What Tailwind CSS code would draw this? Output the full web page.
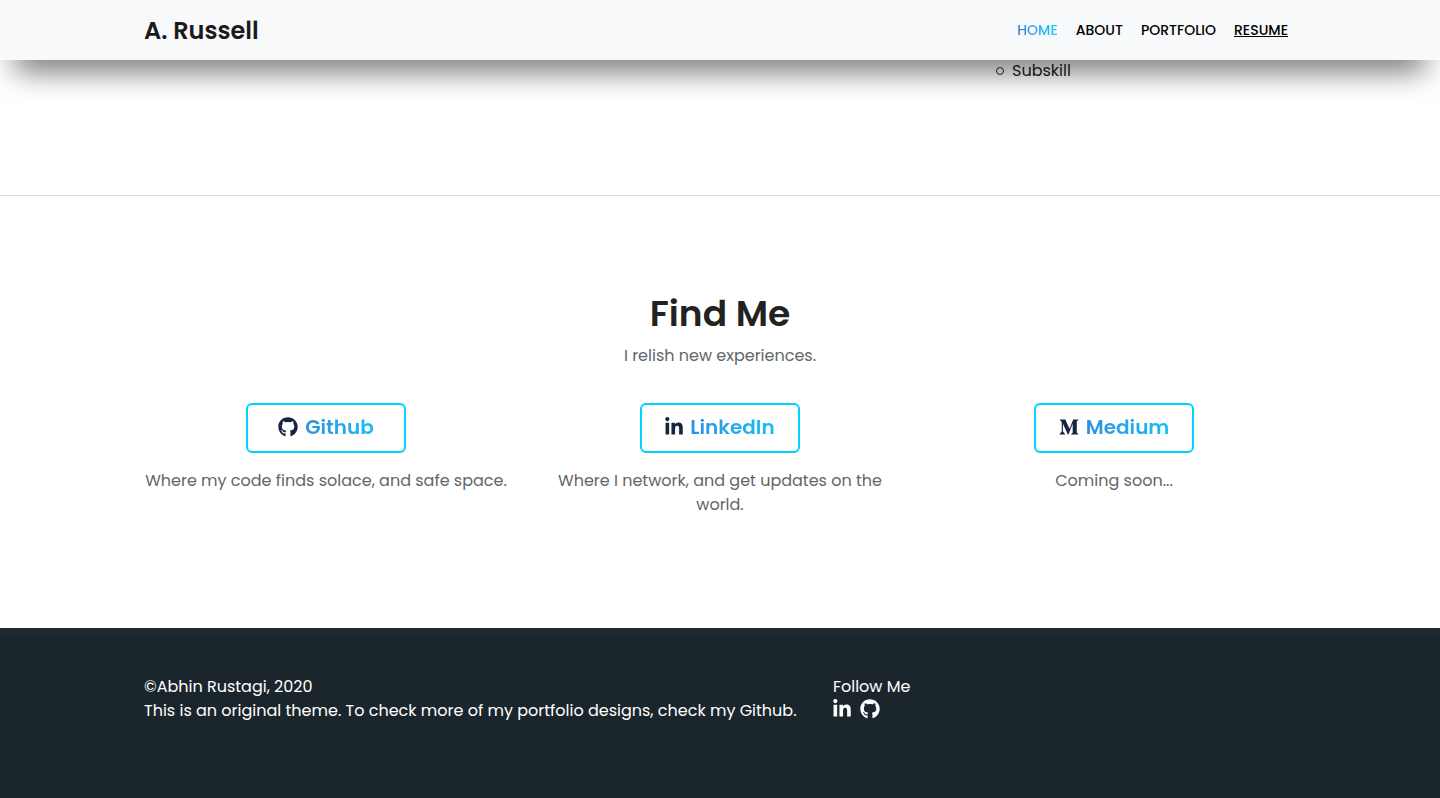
<!DOCTYPE html>
<html lang="en">
<head>
<meta charset="utf-8">
<meta name="viewport" content="width=device-width, initial-scale=1">
<title>A. Russell</title>
<script src="https://cdn.jsdelivr.net/npm/@tailwindcss/browser@4"></script>
</head>
<body class="flex min-h-screen flex-col bg-white font-[Poppins,Inter,sans-serif] text-base text-[#222]">
<svg class="hidden">
  <defs>
    <symbol id="github" viewBox="0 0 496 512"><path d="M165.900 397.400c0 2-2.300 3.600-5.200 3.600-3.300.3-5.600-1.300-5.600-3.600 0-2 2.300-3.600 5.200-3.600 3-.3 5.600 1.300 5.600 3.600zm-31.100-4.500c-.7 2 1.300 4.300 4.300 4.900 2.600 1 5.600 0 6.200-2s-1.300-4.300-4.300-5.200c-2.600-.7-5.500.3-6.200 2.300zm44.200-1.700c-2.900.7-4.900 2.600-4.600 4.900.3 2 2.900 3.300 5.900 2.600 2.900-.7 4.900-2.600 4.600-4.600-.3-1.900-3-3.200-5.900-2.900zM244.800 8C106.100 8 0 113.300 0 252c0 110.900 69.800 205.800 169.500 239.200 12.800 2.300 17.300-5.600 17.300-12.100 0-6.200-.3-40.400-.3-61.400 0 0-70 15-84.700-29.800 0 0-11.400-29.100-27.800-36.600 0 0-22.900-15.700 1.600-15.400 0 0 24.900 2 38.600 25.800 21.900 38.600 58.600 27.500 72.900 20.900 2.300-16 8.800-27.100 16-33.700-55.900-6.200-112.300-14.300-112.300-110.500 0-27.500 7.600-41.300 23.600-58.900-2.600-6.500-11.100-33.300 2.600-67.900 20.900-6.500 69 27 69 27 20-5.600 41.500-8.500 62.800-8.500s42.800 2.900 62.800 8.500c0 0 48.100-33.600 69-27 13.700 34.700 5.200 61.400 2.600 67.900 16 17.700 25.800 31.500 25.800 58.900 0 96.500-58.900 104.200-114.800 110.500 9.200 7.900 17 22.900 17 46.400 0 33.700-.3 75.400-.3 83.600 0 6.500 4.600 14.400 17.300 12.100C428.200 457.800 496 362.900 496 252 496 113.300 383.500 8 244.800 8z"/></symbol>
    <symbol id="linkedin" viewBox="0 0 448 512"><path d="M100.280 448H7.400V148.900h92.880zM53.790 108.100C24.090 108.100 0 83.500 0 53.800a53.790 53.790 0 0 1 107.580 0c0 29.700-24.100 54.300-53.790 54.300zM447.900 448h-92.680V302.400c0-34.700-.7-79.200-48.290-79.200-48.290 0-55.690 37.700-55.690 76.700V448h-92.780V148.900h89.080v40.800h1.300c12.400-23.500 42.690-48.300 87.880-48.300 94 0 111.280 61.900 111.280 142.300V448z"/></symbol>
    <symbol id="medium" viewBox="0 0 512 512"><path d="M71.500 142.300c.6-5.900-1.700-11.800-6.100-15.800L20.300 72.100V64h140.200l108.400 237.700L364.200 64h133.700v8.100l-38.600 37c-3.300 2.500-5 6.700-4.300 10.800v272c-.7 4.100 1 8.300 4.300 10.800l37.700 37v8.100H307.300v-8.100l39.100-37.900c3.800-3.800 3.800-5 3.800-10.800V171.200L241.500 447.100h-14.700L100.400 171.200v184.900c-1.100 7.800 1.500 15.600 7 21.200l50.800 61.600v8.100h-144v-8L65 377.300c5.400-5.600 7.900-13.500 6.500-21.200V142.300z"/></symbol>
  </defs>
</svg>

<header class="sticky top-0 z-10 bg-[#f8f9fb] px-[10%] shadow-[0_25px_30px_-15px_rgba(0,0,0,0.6)]">
  <div class="flex h-15 items-center justify-between pr-2">
    <a href="#" class="pt-0.5 text-2xl font-semibold text-[#1a1a1a]">A. Russell</a>
    <nav class="flex gap-[18px] text-sm font-medium text-black">
      <a href="#" class="bg-linear-to-r from-[#3a7bd5] to-[#00d2ff] bg-clip-text text-transparent">HOME</a>
      <a href="#about">ABOUT</a>
      <a href="#portfolio">PORTFOLIO</a>
      <a href="#resume" class="underline">RESUME</a>
    </nav>
  </div>
</header>

<main class="grow">
  <section class="-mt-px border-b border-[#ddd] px-[10%] pb-28">
    <ul class="ml-auto w-[300px]">
      <li class="flex items-center gap-2 leading-6 before:size-2 before:rounded-full before:border before:border-[#222]">Subskill</li>
    </ul>
  </section>

  <section class="px-[10%] pt-24 pb-[111px] text-center">
    <h2 class="text-4xl leading-11 font-semibold">Find Me</h2>
    <p class="mt-2 leading-6 text-[#5f6769]">I relish new experiences.</p>
    <div class="mt-[35px] grid grid-cols-3 gap-[30px]">
      <div class="flex flex-col items-center gap-4">
        <a href="#github-profile" class="flex h-[50px] w-40 items-center justify-center gap-[7px] rounded-md border-2 border-[#00d2ff] pb-0.5 text-xl font-semibold">
          <svg class="size-5 fill-[#142640]"><use href="#github"/></svg>
          <span class="bg-linear-to-r from-[#2f8fe0] to-[#10c0f5] bg-clip-text text-transparent">Github</span>
        </a>
        <p class="leading-6 text-[#5f6769]">Where my code finds solace, and safe space.</p>
      </div>
      <div class="flex flex-col items-center gap-4">
        <a href="#linkedin-profile" class="flex h-[50px] w-40 items-center justify-center gap-[7px] rounded-md border-2 border-[#00d2ff] pb-0.5 text-xl font-semibold">
          <svg class="h-5 w-[18px] fill-[#142640]"><use href="#linkedin"/></svg>
          <span class="bg-linear-to-r from-[#2f8fe0] to-[#10c0f5] bg-clip-text text-transparent">LinkedIn</span>
        </a>
        <p class="leading-6 text-[#5f6769]">Where I network, and get updates on the world.</p>
      </div>
      <div class="flex flex-col items-center gap-4">
        <a href="#medium-profile" class="flex h-[50px] w-40 items-center justify-center gap-[7px] rounded-md border-2 border-[#00d2ff] pb-0.5 text-xl font-semibold">
          <svg class="size-5 fill-[#142640]"><use href="#medium"/></svg>
          <span class="bg-linear-to-r from-[#2f8fe0] to-[#10c0f5] bg-clip-text text-transparent">Medium</span>
        </a>
        <p class="leading-6 text-[#5f6769]">Coming soon...</p>
      </div>
    </div>
  </section>
</main>

<footer class="flex border-t-6 border-[#222831] bg-[#1b262c] px-[10%] pt-[41px] pb-[79px] text-white">
  <div class="w-[59.8%] leading-6">
    <p>©Abhin Rustagi, 2020</p>
    <p>This is an original theme. To check more of my portfolio designs, check my Github.</p>
  </div>
  <div class="leading-6">
    <p>Follow Me</p>
    <div class="flex gap-[9px]">
      <a href="#linkedin-profile" aria-label="LinkedIn"><svg class="h-5 w-[18px] fill-white"><use href="#linkedin"/></svg></a>
      <a href="#github-profile" aria-label="Github"><svg class="size-5 fill-white"><use href="#github"/></svg></a>
    </div>
  </div>
</footer>
</body>
</html>
